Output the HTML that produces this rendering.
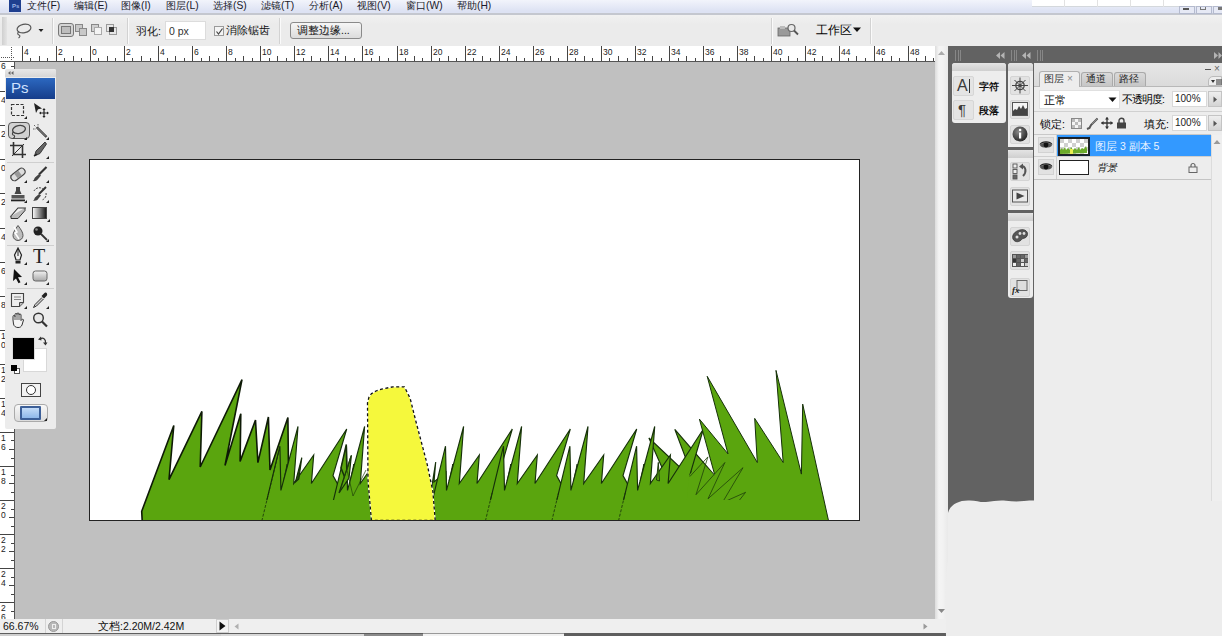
<!DOCTYPE html><html><head><meta charset="utf-8"><title>Photoshop</title><style>
*{margin:0;padding:0;box-sizing:border-box;}
html,body{width:1222px;height:636px;overflow:hidden;background:#c0c0c0;font-family:"Liberation Sans", sans-serif;}
#root{position:relative;width:1222px;height:636px;overflow:hidden;background:#c0c0c0;}
.abs{position:absolute;}
.t{position:absolute;white-space:nowrap;color:#111;font-size:12px;line-height:14px;}
</style></head><body><div id="root">
<div class="abs" style="left:0;top:0;width:1222px;height:15px;background:linear-gradient(#f2f4fb,#dde2f3 85%);border-bottom:2px solid #c4c7cf;"></div>
<div class="abs" style="left:9px;top:0;width:12px;height:12px;background:#1f3f8f;"></div><div class="t" style="left:12px;top:3px;font-size:6px;line-height:7px;font-weight:bold;color:#9fb8e8;">Ps</div>
<div class="t" style="left:27px;top:-1px;font-size:10.3px;color:#1a1a2a;">文件(F)</div>
<div class="t" style="left:74px;top:-1px;font-size:10.3px;color:#1a1a2a;">编辑(E)</div>
<div class="t" style="left:121px;top:-1px;font-size:10.3px;color:#1a1a2a;">图像(I)</div>
<div class="t" style="left:166px;top:-1px;font-size:10.3px;color:#1a1a2a;">图层(L)</div>
<div class="t" style="left:213px;top:-1px;font-size:10.3px;color:#1a1a2a;">选择(S)</div>
<div class="t" style="left:261px;top:-1px;font-size:10.3px;color:#1a1a2a;">滤镜(T)</div>
<div class="t" style="left:309px;top:-1px;font-size:10.3px;color:#1a1a2a;">分析(A)</div>
<div class="t" style="left:357px;top:-1px;font-size:10.3px;color:#1a1a2a;">视图(V)</div>
<div class="t" style="left:406px;top:-1px;font-size:10.3px;color:#1a1a2a;">窗口(W)</div>
<div class="t" style="left:457px;top:-1px;font-size:10.3px;color:#1a1a2a;">帮助(H)</div>
<div class="abs" style="left:1032px;top:0;width:190px;height:7px;background:#fff;border-bottom:1px solid #d4d8dc;"></div>
<div class="abs" style="left:1064px;top:0;width:1px;height:7px;background:#e2e2e2;"></div>
<div class="abs" style="left:1097px;top:0;width:1px;height:7px;background:#e2e2e2;"></div>
<div class="abs" style="left:1130px;top:0;width:1px;height:7px;background:#e2e2e2;"></div>
<div class="abs" style="left:1163px;top:0;width:1px;height:7px;background:#e2e2e2;"></div>
<div class="abs" style="left:1179px;top:6px;width:16px;height:8px;border:1px solid #b4bace;background:#e6e9f5;"></div>
<div class="abs" style="left:1196px;top:6px;width:16px;height:8px;border:1px solid #b4bace;background:#e6e9f5;"></div>
<div class="abs" style="left:1213px;top:6px;width:16px;height:8px;border:1px solid #b4bace;background:#e6e9f5;"></div>
<div class="abs" style="left:1183px;top:8px;width:6px;height:2px;background:#555;"></div>
<div class="abs" style="left:1200px;top:7px;width:6px;height:3px;border:1px solid #777;border-top:none;"></div>
<div class="abs" style="left:1218px;top:7px;width:4px;height:3px;background:#777;"></div>
<div class="abs" style="left:0;top:15px;width:1222px;height:31px;background:linear-gradient(#f1f1f1,#ebebeb 30%,#ebebeb);"></div>
<div class="abs" style="left:948px;top:46px;width:274px;height:590px;background:#626262;"></div>
<div class="abs" style="left:0;top:46px;width:935px;height:16px;background:#fff;border-bottom:1px solid #555;"></div>
<div class="abs" style="left:0;top:62px;width:15px;height:557px;background:#fff;border-right:1px solid #555;"></div>
<div class="abs" style="left:935px;top:46px;width:13px;height:573px;background:linear-gradient(90deg,#dcdcdc,#f4f4f4 30%,#f2f2f2 60%,#e9e9e9);"></div>
<div class="abs" style="left:0;top:619px;width:948px;height:14px;background:#efefef;"></div>
<div class="abs" style="left:0;top:633px;width:948px;height:3px;background:#5e5e5e;"></div>
<div class="abs" style="left:0;top:634px;width:221px;height:2px;background:#cfcfcf;"></div>
<div class="abs" style="left:221px;top:634px;width:143px;height:2px;background:#d8d8d8;"></div>
<div class="abs" style="left:364px;top:634px;width:59px;height:2px;background:#8a8a8a;"></div>
<div class="abs" style="left:423px;top:633px;width:141px;height:3px;background:#f2f2f2;border-top:1px solid #999;"></div>
<div class="t" style="left:3px;top:620px;font-size:10.5px;line-height:13px;color:#111;">66.67%</div>
<div class="abs" style="left:45px;top:619px;width:1px;height:14px;background:#d4d4d4;"></div><div class="abs" style="left:62px;top:619px;width:1px;height:14px;background:#d4d4d4;"></div>
<div class="abs" style="left:48px;top:621px;width:11px;height:11px;border-radius:50%;background:#b8b8b8;border:1px solid #999;"></div><div class="abs" style="left:52px;top:624px;width:4px;height:5px;border:1px solid #eee;"></div>
<div class="t" style="left:98px;top:620px;font-size:10.5px;line-height:13px;color:#111;">文档:2.20M/2.42M</div>
<div class="abs" style="left:216px;top:619px;width:13px;height:14px;background:#f4f4f4;border:1px solid #cfcfcf;"></div><svg class="abs" style="left:219px;top:621px" width="7" height="10"><path d="M0.5 0.5v9l6-4.500z" fill="#111"/></svg>
<svg class="abs" style="left:234px;top:623px" width="5" height="7"><path d="M4.500 0.500v6l-4-3z" fill="#b0b0b0"/></svg>
<svg class="abs" style="left:923px;top:623px" width="5" height="7"><path d="M0.500 0.500v6l4-3z" fill="#999"/></svg>
<div class="abs" style="left:89px;top:159px;width:771px;height:362px;background:#fff;border:1px solid #222;"></div>
<svg class="abs" style="left:0;top:0" width="1222" height="636" viewBox="0 0 1222 636"><defs><clipPath id="cv"><rect x="90" y="160" width="769" height="360"/></clipPath></defs><g clip-path="url(#cv)"><polygon points="142.2,521.0 141.7,511.3 173.8,425.5 169.0,479.6 201.9,411.4 200.2,467.0 242.0,379.7 225.0,465.5 240.8,413.8 240.1,461.4 255.5,420.0 257.9,462.6 268.4,417.0 270.0,469.9 287.9,417.5 288.5,470.0 300.0,521.0" fill="#5aa50e" stroke="#0e1a06" stroke-width="1.6" stroke-linejoin="miter" /><polygon points="428.0,521.0 431.8,486.5 435.7,462.0 434.0,482.0 446.0,472.0 447.0,521.0" fill="#5aa50e" stroke="#16300a" stroke-width="1.15" stroke-linejoin="miter" /><polygon points="283.5,481.0 287.2,464.0 285.5,483.0" fill="#5aa50e" stroke="#16300a" stroke-width="0.9" stroke-linejoin="miter" /><polygon points="261.8,521.0 279.9,446.2 280.9,490.4 298.0,426.5 293.7,483.5 313.7,455.0 311.4,483.5 346.7,429.0 333.0,475.6 358.0,521.0" fill="#5aa50e" stroke="#16300a" stroke-width="1.15" stroke-linejoin="miter" /><polygon points="350.1,481.0 353.8,464.0 352.1,483.0" fill="#5aa50e" stroke="#16300a" stroke-width="0.9" stroke-linejoin="miter" /><polygon points="328.4,521.0 346.5,446.2 347.5,490.4 364.6,426.5 360.3,483.5 380.3,455.0 378.0,483.5 413.3,429.0 399.6,475.6 424.6,521.0" fill="#5aa50e" stroke="#16300a" stroke-width="1.15" stroke-linejoin="miter" /><polygon points="449.1,481.0 452.8,464.0 451.1,483.0" fill="#5aa50e" stroke="#16300a" stroke-width="0.9" stroke-linejoin="miter" /><polygon points="427.4,521.0 445.5,446.2 446.5,490.4 463.6,426.5 459.3,483.5 479.3,455.0 477.0,483.5 512.3,429.0 498.6,475.6 523.6,521.0" fill="#5aa50e" stroke="#16300a" stroke-width="1.15" stroke-linejoin="miter" /><polygon points="507.1,481.0 510.8,464.0 509.1,483.0" fill="#5aa50e" stroke="#16300a" stroke-width="0.9" stroke-linejoin="miter" /><polygon points="485.4,521.0 503.5,446.2 504.5,490.4 521.6,426.5 517.3,483.5 537.3,455.0 535.0,483.5 570.3,429.0 556.6,475.6 581.6,521.0" fill="#5aa50e" stroke="#16300a" stroke-width="1.15" stroke-linejoin="miter" /><polygon points="573.5,481.0 577.2,464.0 575.5,483.0" fill="#5aa50e" stroke="#16300a" stroke-width="0.9" stroke-linejoin="miter" /><polygon points="551.8,521.0 569.9,446.2 570.9,490.4 588.0,426.5 583.7,483.5 603.7,455.0 601.4,483.5 636.7,429.0 623.0,475.6 648.0,521.0" fill="#5aa50e" stroke="#16300a" stroke-width="1.15" stroke-linejoin="miter" /><polygon points="640.2,481.0 643.9,464.0 642.2,483.0" fill="#5aa50e" stroke="#16300a" stroke-width="0.9" stroke-linejoin="miter" /><polygon points="674.8,429.4 716.0,477.0 694.0,480.0" fill="#5aa50e" stroke="#16300a" stroke-width="1.15" stroke-linejoin="miter" /><polygon points="648.9,438.0 684.0,471.0 672.0,490.0" fill="#5aa50e" stroke="#16300a" stroke-width="1.15" stroke-linejoin="miter" /><polygon points="618.5,521.0 636.6,446.2 637.6,490.4 654.7,426.5 650.4,483.5 670.4,455.0 668.1,483.5 703.4,429.0 689.7,475.6 714.7,521.0" fill="#5aa50e" stroke="#16300a" stroke-width="1.15" stroke-linejoin="miter" /><polygon points="656.5,480.0 658.3,462.4 659.5,481.0" fill="#5aa50e" stroke="#16300a" stroke-width="0.9" stroke-linejoin="miter" /><polygon points="295.5,482.0 301.8,457.7 298.8,479.0" fill="#274d0c" stroke="#16300a" stroke-width="1.2" stroke-linejoin="miter" /><polygon points="341.0,468.0 346.3,444.5 347.0,483.0" fill="#5aa50e" stroke="#16300a" stroke-width="1.5" stroke-linejoin="miter" /><polygon points="339.0,493.0 351.4,455.3 349.0,478.0" fill="#5aa50e" stroke="#16300a" stroke-width="1.2" stroke-linejoin="miter" /><polygon points="689.0,476.0 700.0,460.0 716.0,477.0 705.0,521.0 685.0,521.0" fill="#5aa50e" stroke="none" stroke-width="0" stroke-linejoin="miter" /><polygon points="828.6,521.0 802.7,404.1 801.4,474.1 776.0,370.4 783.2,462.5 754.7,418.4 757.3,462.5 707.2,376.3 728.0,453.9 699.4,419.1 714.5,474.1 706.0,521.0" fill="#5aa50e" stroke="none" stroke-width="0" stroke-linejoin="miter" /><polyline points="828.6,521.0 802.7,404.1 801.4,474.1 776.0,370.4 783.2,462.5 754.7,418.4 757.3,462.5 707.2,376.3 728.0,453.9 699.4,419.1 714.5,474.1" fill="none" stroke="#16300a" stroke-width="1"/><polyline points="689.8,476.6 707.9,456.9 696,494.7 724.9,462.5 708,498.8 743,467.7 722.3,502.7 745.6,492.3 731.3,510.5 749.5,511.8 737.8,518.8" fill="none" stroke="#20400a" stroke-width="0.8"/><polyline points="339.5,492.8 350.9,456.3 347,470 353,496 366,470" fill="none" stroke="#20400a" stroke-width="0.7"/><rect x="147" y="500" width="676" height="21" fill="#5aa50e"/><line x1="261.8" y1="521" x2="278.7" y2="452" stroke="#16300a" stroke-width="0.8" stroke-dasharray="3 1.5"/><line x1="485.40000000000003" y1="521" x2="492.1" y2="493" stroke="#16300a" stroke-width="0.8" stroke-dasharray="3 1.5"/><line x1="551.8" y1="521" x2="558.5" y2="493" stroke="#16300a" stroke-width="0.8" stroke-dasharray="3 1.5"/><line x1="618.5" y1="521" x2="625.2" y2="493" stroke="#16300a" stroke-width="0.8" stroke-dasharray="3 1.5"/><polygon points="371.4,520.5 368.0,480.3 367.5,402.8 369.0,397.0 371.4,393.7 376.0,391.0 381.6,389.1 393.0,386.8 404.4,386.8 410.1,398.2 415.8,421.0 427.2,464.3 432.9,491.6 435.2,520.5" fill="#f5f83c" stroke="#fff" stroke-width="1" stroke-linejoin="miter" /><polygon points="371.4,520.5 368.0,480.3 367.5,402.8 369.0,397.0 371.4,393.7 376.0,391.0 381.6,389.1 393.0,386.8 404.4,386.8 410.1,398.2 415.8,421.0 427.2,464.3 432.9,491.6 435.2,520.5" fill="none" stroke="#111" stroke-width="1.3" stroke-linejoin="miter" stroke-dasharray="3 2.5"/></g></svg>
<div class="abs" style="left:952px;top:63px;width:54px;height:60px;background:#ededed;border-radius:3px;"></div>
<div class="abs" style="left:1008px;top:63px;width:25px;height:235px;background:#ededed;border-radius:3px;"></div>
<div class="abs" style="left:1034px;top:63px;width:188px;height:573px;background:#ededed;"></div>
<svg class="abs" style="left:940px;top:495px" width="282" height="141" viewBox="940 495 282 141"><path d="M948 636V513C950 505 958 500.500 968 500.500C975 500 980 502.500 986 502C994 501.500 998 500 1006 500.800C1012 501.500 1018 501.800 1024 501C1028 500.500 1031 500.500 1034 500.500H1222V636z" fill="#ededed"/><path d="M948 560C945.500 575 945.500 600 946 636H948z" fill="#ededed"/></svg>
<svg class="abs" style="left:0;top:0" width="1222" height="636" viewBox="0 0 1222 636" shape-rendering="crispEdges"><rect x="22" y="46" width="1" height="15" fill="#444"/><rect x="30" y="58" width="1" height="3" fill="#444"/><rect x="39" y="56" width="1" height="5" fill="#444"/><rect x="47" y="58" width="1" height="3" fill="#444"/><rect x="56" y="46" width="1" height="15" fill="#444"/><rect x="64" y="58" width="1" height="3" fill="#444"/><rect x="73" y="56" width="1" height="5" fill="#444"/><rect x="81" y="58" width="1" height="3" fill="#444"/><rect x="90" y="46" width="1" height="15" fill="#444"/><rect x="98" y="58" width="1" height="3" fill="#444"/><rect x="107" y="56" width="1" height="5" fill="#444"/><rect x="115" y="58" width="1" height="3" fill="#444"/><rect x="124" y="46" width="1" height="15" fill="#444"/><rect x="132" y="58" width="1" height="3" fill="#444"/><rect x="141" y="56" width="1" height="5" fill="#444"/><rect x="150" y="58" width="1" height="3" fill="#444"/><rect x="158" y="46" width="1" height="15" fill="#444"/><rect x="167" y="58" width="1" height="3" fill="#444"/><rect x="175" y="56" width="1" height="5" fill="#444"/><rect x="184" y="58" width="1" height="3" fill="#444"/><rect x="192" y="46" width="1" height="15" fill="#444"/><rect x="201" y="58" width="1" height="3" fill="#444"/><rect x="209" y="56" width="1" height="5" fill="#444"/><rect x="218" y="58" width="1" height="3" fill="#444"/><rect x="226" y="46" width="1" height="15" fill="#444"/><rect x="235" y="58" width="1" height="3" fill="#444"/><rect x="243" y="56" width="1" height="5" fill="#444"/><rect x="252" y="58" width="1" height="3" fill="#444"/><rect x="260" y="46" width="1" height="15" fill="#444"/><rect x="269" y="58" width="1" height="3" fill="#444"/><rect x="277" y="56" width="1" height="5" fill="#444"/><rect x="286" y="58" width="1" height="3" fill="#444"/><rect x="294" y="46" width="1" height="15" fill="#444"/><rect x="303" y="58" width="1" height="3" fill="#444"/><rect x="311" y="56" width="1" height="5" fill="#444"/><rect x="320" y="58" width="1" height="3" fill="#444"/><rect x="328" y="46" width="1" height="15" fill="#444"/><rect x="337" y="58" width="1" height="3" fill="#444"/><rect x="345" y="56" width="1" height="5" fill="#444"/><rect x="354" y="58" width="1" height="3" fill="#444"/><rect x="362" y="46" width="1" height="15" fill="#444"/><rect x="371" y="58" width="1" height="3" fill="#444"/><rect x="379" y="56" width="1" height="5" fill="#444"/><rect x="388" y="58" width="1" height="3" fill="#444"/><rect x="397" y="46" width="1" height="15" fill="#444"/><rect x="405" y="58" width="1" height="3" fill="#444"/><rect x="414" y="56" width="1" height="5" fill="#444"/><rect x="422" y="58" width="1" height="3" fill="#444"/><rect x="431" y="46" width="1" height="15" fill="#444"/><rect x="439" y="58" width="1" height="3" fill="#444"/><rect x="448" y="56" width="1" height="5" fill="#444"/><rect x="456" y="58" width="1" height="3" fill="#444"/><rect x="465" y="46" width="1" height="15" fill="#444"/><rect x="473" y="58" width="1" height="3" fill="#444"/><rect x="482" y="56" width="1" height="5" fill="#444"/><rect x="490" y="58" width="1" height="3" fill="#444"/><rect x="499" y="46" width="1" height="15" fill="#444"/><rect x="507" y="58" width="1" height="3" fill="#444"/><rect x="516" y="56" width="1" height="5" fill="#444"/><rect x="524" y="58" width="1" height="3" fill="#444"/><rect x="533" y="46" width="1" height="15" fill="#444"/><rect x="541" y="58" width="1" height="3" fill="#444"/><rect x="550" y="56" width="1" height="5" fill="#444"/><rect x="558" y="58" width="1" height="3" fill="#444"/><rect x="567" y="46" width="1" height="15" fill="#444"/><rect x="575" y="58" width="1" height="3" fill="#444"/><rect x="584" y="56" width="1" height="5" fill="#444"/><rect x="592" y="58" width="1" height="3" fill="#444"/><rect x="601" y="46" width="1" height="15" fill="#444"/><rect x="609" y="58" width="1" height="3" fill="#444"/><rect x="618" y="56" width="1" height="5" fill="#444"/><rect x="627" y="58" width="1" height="3" fill="#444"/><rect x="635" y="46" width="1" height="15" fill="#444"/><rect x="644" y="58" width="1" height="3" fill="#444"/><rect x="652" y="56" width="1" height="5" fill="#444"/><rect x="661" y="58" width="1" height="3" fill="#444"/><rect x="669" y="46" width="1" height="15" fill="#444"/><rect x="678" y="58" width="1" height="3" fill="#444"/><rect x="686" y="56" width="1" height="5" fill="#444"/><rect x="695" y="58" width="1" height="3" fill="#444"/><rect x="703" y="46" width="1" height="15" fill="#444"/><rect x="712" y="58" width="1" height="3" fill="#444"/><rect x="720" y="56" width="1" height="5" fill="#444"/><rect x="729" y="58" width="1" height="3" fill="#444"/><rect x="737" y="46" width="1" height="15" fill="#444"/><rect x="746" y="58" width="1" height="3" fill="#444"/><rect x="754" y="56" width="1" height="5" fill="#444"/><rect x="763" y="58" width="1" height="3" fill="#444"/><rect x="771" y="46" width="1" height="15" fill="#444"/><rect x="780" y="58" width="1" height="3" fill="#444"/><rect x="788" y="56" width="1" height="5" fill="#444"/><rect x="797" y="58" width="1" height="3" fill="#444"/><rect x="805" y="46" width="1" height="15" fill="#444"/><rect x="814" y="58" width="1" height="3" fill="#444"/><rect x="822" y="56" width="1" height="5" fill="#444"/><rect x="831" y="58" width="1" height="3" fill="#444"/><rect x="839" y="46" width="1" height="15" fill="#444"/><rect x="848" y="58" width="1" height="3" fill="#444"/><rect x="856" y="56" width="1" height="5" fill="#444"/><rect x="865" y="58" width="1" height="3" fill="#444"/><rect x="874" y="46" width="1" height="15" fill="#444"/><rect x="882" y="58" width="1" height="3" fill="#444"/><rect x="891" y="56" width="1" height="5" fill="#444"/><rect x="899" y="58" width="1" height="3" fill="#444"/><rect x="908" y="46" width="1" height="15" fill="#444"/><rect x="916" y="58" width="1" height="3" fill="#444"/><rect x="925" y="56" width="1" height="5" fill="#444"/><rect x="933" y="58" width="1" height="3" fill="#444"/><rect x="11" y="66" width="3" height="1" fill="#444"/><rect x="9" y="74" width="5" height="1" fill="#444"/><rect x="11" y="83" width="3" height="1" fill="#444"/><rect x="0" y="91" width="14" height="1" fill="#444"/><rect x="11" y="100" width="3" height="1" fill="#444"/><rect x="9" y="108" width="5" height="1" fill="#444"/><rect x="11" y="117" width="3" height="1" fill="#444"/><rect x="0" y="125" width="14" height="1" fill="#444"/><rect x="11" y="134" width="3" height="1" fill="#444"/><rect x="9" y="142" width="5" height="1" fill="#444"/><rect x="11" y="151" width="3" height="1" fill="#444"/><rect x="0" y="159" width="14" height="1" fill="#444"/><rect x="11" y="168" width="3" height="1" fill="#444"/><rect x="9" y="176" width="5" height="1" fill="#444"/><rect x="11" y="185" width="3" height="1" fill="#444"/><rect x="0" y="193" width="14" height="1" fill="#444"/><rect x="11" y="202" width="3" height="1" fill="#444"/><rect x="9" y="211" width="5" height="1" fill="#444"/><rect x="11" y="219" width="3" height="1" fill="#444"/><rect x="0" y="228" width="14" height="1" fill="#444"/><rect x="11" y="236" width="3" height="1" fill="#444"/><rect x="9" y="245" width="5" height="1" fill="#444"/><rect x="11" y="253" width="3" height="1" fill="#444"/><rect x="0" y="262" width="14" height="1" fill="#444"/><rect x="11" y="270" width="3" height="1" fill="#444"/><rect x="9" y="279" width="5" height="1" fill="#444"/><rect x="11" y="287" width="3" height="1" fill="#444"/><rect x="0" y="296" width="14" height="1" fill="#444"/><rect x="11" y="304" width="3" height="1" fill="#444"/><rect x="9" y="313" width="5" height="1" fill="#444"/><rect x="11" y="321" width="3" height="1" fill="#444"/><rect x="0" y="330" width="14" height="1" fill="#444"/><rect x="11" y="338" width="3" height="1" fill="#444"/><rect x="9" y="347" width="5" height="1" fill="#444"/><rect x="11" y="355" width="3" height="1" fill="#444"/><rect x="0" y="364" width="14" height="1" fill="#444"/><rect x="11" y="372" width="3" height="1" fill="#444"/><rect x="9" y="381" width="5" height="1" fill="#444"/><rect x="11" y="389" width="3" height="1" fill="#444"/><rect x="0" y="398" width="14" height="1" fill="#444"/><rect x="11" y="406" width="3" height="1" fill="#444"/><rect x="9" y="415" width="5" height="1" fill="#444"/><rect x="11" y="423" width="3" height="1" fill="#444"/><rect x="0" y="432" width="14" height="1" fill="#444"/><rect x="11" y="440" width="3" height="1" fill="#444"/><rect x="9" y="449" width="5" height="1" fill="#444"/><rect x="11" y="458" width="3" height="1" fill="#444"/><rect x="0" y="466" width="14" height="1" fill="#444"/><rect x="11" y="475" width="3" height="1" fill="#444"/><rect x="9" y="483" width="5" height="1" fill="#444"/><rect x="11" y="492" width="3" height="1" fill="#444"/><rect x="0" y="500" width="14" height="1" fill="#444"/><rect x="11" y="509" width="3" height="1" fill="#444"/><rect x="9" y="517" width="5" height="1" fill="#444"/><rect x="11" y="526" width="3" height="1" fill="#444"/><rect x="0" y="534" width="14" height="1" fill="#444"/><rect x="11" y="543" width="3" height="1" fill="#444"/><rect x="9" y="551" width="5" height="1" fill="#444"/><rect x="11" y="560" width="3" height="1" fill="#444"/><rect x="0" y="568" width="14" height="1" fill="#444"/><rect x="11" y="577" width="3" height="1" fill="#444"/><rect x="9" y="585" width="5" height="1" fill="#444"/><rect x="11" y="594" width="3" height="1" fill="#444"/><rect x="0" y="602" width="14" height="1" fill="#444"/><rect x="11" y="611" width="3" height="1" fill="#444"/><path d="M11.5 47V61M1 57.5H14" stroke="#555" stroke-width="1" stroke-dasharray="1 1" fill="none"/></svg>
<div class="t" style="left:24px;top:48px;font-size:8.5px;line-height:9px;color:#222;">4</div>
<div class="t" style="left:58px;top:48px;font-size:8.5px;line-height:9px;color:#222;">2</div>
<div class="t" style="left:92px;top:48px;font-size:8.5px;line-height:9px;color:#222;">0</div>
<div class="t" style="left:126px;top:48px;font-size:8.5px;line-height:9px;color:#222;">2</div>
<div class="t" style="left:160px;top:48px;font-size:8.5px;line-height:9px;color:#222;">4</div>
<div class="t" style="left:194px;top:48px;font-size:8.5px;line-height:9px;color:#222;">6</div>
<div class="t" style="left:228px;top:48px;font-size:8.5px;line-height:9px;color:#222;">8</div>
<div class="t" style="left:262px;top:48px;font-size:8.5px;line-height:9px;color:#222;">10</div>
<div class="t" style="left:296px;top:48px;font-size:8.5px;line-height:9px;color:#222;">12</div>
<div class="t" style="left:330px;top:48px;font-size:8.5px;line-height:9px;color:#222;">14</div>
<div class="t" style="left:364px;top:48px;font-size:8.5px;line-height:9px;color:#222;">16</div>
<div class="t" style="left:399px;top:48px;font-size:8.5px;line-height:9px;color:#222;">18</div>
<div class="t" style="left:433px;top:48px;font-size:8.5px;line-height:9px;color:#222;">20</div>
<div class="t" style="left:467px;top:48px;font-size:8.5px;line-height:9px;color:#222;">22</div>
<div class="t" style="left:501px;top:48px;font-size:8.5px;line-height:9px;color:#222;">24</div>
<div class="t" style="left:535px;top:48px;font-size:8.5px;line-height:9px;color:#222;">26</div>
<div class="t" style="left:569px;top:48px;font-size:8.5px;line-height:9px;color:#222;">28</div>
<div class="t" style="left:603px;top:48px;font-size:8.5px;line-height:9px;color:#222;">30</div>
<div class="t" style="left:637px;top:48px;font-size:8.5px;line-height:9px;color:#222;">32</div>
<div class="t" style="left:671px;top:48px;font-size:8.5px;line-height:9px;color:#222;">34</div>
<div class="t" style="left:705px;top:48px;font-size:8.5px;line-height:9px;color:#222;">36</div>
<div class="t" style="left:739px;top:48px;font-size:8.5px;line-height:9px;color:#222;">38</div>
<div class="t" style="left:773px;top:48px;font-size:8.5px;line-height:9px;color:#222;">40</div>
<div class="t" style="left:807px;top:48px;font-size:8.5px;line-height:9px;color:#222;">42</div>
<div class="t" style="left:841px;top:48px;font-size:8.5px;line-height:9px;color:#222;">44</div>
<div class="t" style="left:876px;top:48px;font-size:8.5px;line-height:9px;color:#222;">46</div>
<div class="t" style="left:910px;top:48px;font-size:8.5px;line-height:9px;color:#222;">48</div>
<div class="abs" style="left:0;top:62px;width:14px;height:557px;overflow:hidden;">
<div class="t" style="left:1px;top:0px;font-size:8.5px;line-height:9px;color:#222;">6</div>
<div class="t" style="left:1px;top:34px;font-size:8.5px;line-height:9px;color:#222;">4</div>
<div class="t" style="left:1px;top:68px;font-size:8.5px;line-height:9px;color:#222;">2</div>
<div class="t" style="left:1px;top:102px;font-size:8.5px;line-height:9px;color:#222;">0</div>
<div class="t" style="left:1px;top:136px;font-size:8.5px;line-height:9px;color:#222;">2</div>
<div class="t" style="left:1px;top:171px;font-size:8.5px;line-height:9px;color:#222;">4</div>
<div class="t" style="left:1px;top:205px;font-size:8.5px;line-height:9px;color:#222;">6</div>
<div class="t" style="left:1px;top:239px;font-size:8.5px;line-height:9px;color:#222;">8</div>
<div class="t" style="left:1px;top:270px;font-size:8.5px;line-height:9px;color:#222;">1</div>
<div class="t" style="left:1px;top:279px;font-size:8.5px;line-height:9px;color:#222;">0</div>
<div class="t" style="left:1px;top:304px;font-size:8.5px;line-height:9px;color:#222;">1</div>
<div class="t" style="left:1px;top:313px;font-size:8.5px;line-height:9px;color:#222;">2</div>
<div class="t" style="left:1px;top:338px;font-size:8.5px;line-height:9px;color:#222;">1</div>
<div class="t" style="left:1px;top:347px;font-size:8.5px;line-height:9px;color:#222;">4</div>
<div class="t" style="left:1px;top:372px;font-size:8.5px;line-height:9px;color:#222;">1</div>
<div class="t" style="left:1px;top:381px;font-size:8.5px;line-height:9px;color:#222;">6</div>
<div class="t" style="left:1px;top:406px;font-size:8.5px;line-height:9px;color:#222;">1</div>
<div class="t" style="left:1px;top:415px;font-size:8.5px;line-height:9px;color:#222;">8</div>
<div class="t" style="left:1px;top:440px;font-size:8.5px;line-height:9px;color:#222;">2</div>
<div class="t" style="left:1px;top:449px;font-size:8.5px;line-height:9px;color:#222;">0</div>
<div class="t" style="left:1px;top:474px;font-size:8.5px;line-height:9px;color:#222;">2</div>
<div class="t" style="left:1px;top:483px;font-size:8.5px;line-height:9px;color:#222;">2</div>
<div class="t" style="left:1px;top:508px;font-size:8.5px;line-height:9px;color:#222;">2</div>
<div class="t" style="left:1px;top:517px;font-size:8.5px;line-height:9px;color:#222;">4</div>
<div class="t" style="left:1px;top:542px;font-size:8.5px;line-height:9px;color:#222;">2</div>
<div class="t" style="left:1px;top:551px;font-size:8.5px;line-height:9px;color:#222;">6</div>
</div>
<div class="abs" style="left:2px;top:17px;width:5px;height:28px;background:linear-gradient(90deg,#cfcfcf,#e4e4e4);"></div>
<svg class="abs" style="left:14px;top:22px" width="32" height="18" viewBox="0 0 32 18"><ellipse cx="10" cy="6.5" rx="7" ry="4.3" transform="rotate(-12 10 6.5)" fill="none" stroke="#555" stroke-width="1.2"/><path d="M5 9.5c-2 1.5-1.5 3 0 3.5s1 2-0.5 3" fill="none" stroke="#555" stroke-width="1.1"/><path d="M24.5 7h5l-2.5 3z" fill="#222"/></svg>
<div class="abs" style="left:52px;top:18px;width:1px;height:26px;background:#d2d2d2;border-right:1px solid #fafafa;box-sizing:content-box;"></div>
<div class="abs" style="left:127px;top:18px;width:1px;height:26px;background:#d2d2d2;border-right:1px solid #fafafa;box-sizing:content-box;"></div>
<div class="abs" style="left:279px;top:18px;width:1px;height:26px;background:#d2d2d2;border-right:1px solid #fafafa;box-sizing:content-box;"></div>
<div class="abs" style="left:771px;top:18px;width:1px;height:26px;background:#d2d2d2;border-right:1px solid #fafafa;box-sizing:content-box;"></div>
<div class="abs" style="left:870px;top:18px;width:1px;height:26px;background:#d2d2d2;border-right:1px solid #fafafa;box-sizing:content-box;"></div>
<div class="abs" style="left:58px;top:23px;width:16px;height:14px;border:1px solid #777;border-radius:3px;background:#d4d4d4;"></div>
<div class="abs" style="left:61px;top:26px;width:10px;height:8px;border:1px solid #777;background:#bdbdbd;"></div>
<div class="abs" style="left:75px;top:24px;width:8px;height:8px;border:1px solid #888;background:#c8c8c8;"></div><div class="abs" style="left:79px;top:28px;width:8px;height:8px;border:1px solid #888;background:#c8c8c8;"></div>
<div class="abs" style="left:91px;top:24px;width:8px;height:8px;border:1px solid #888;background:#d0d0d0;"></div><div class="abs" style="left:94px;top:27px;width:8px;height:8px;border:1px solid #aaa;background:#f4f4f4;"></div>
<div class="abs" style="left:106px;top:24px;width:8px;height:8px;border:1px solid #999;background:#e6e6e6;"></div><div class="abs" style="left:109px;top:27px;width:8px;height:8px;border:1px solid #999;background:#e6e6e6;"></div><div class="abs" style="left:109px;top:27px;width:5px;height:5px;background:#333;"></div>
<div class="t" style="left:136px;top:24px;font-size:10.5px;">羽化:</div>
<div class="abs" style="left:165px;top:21px;width:41px;height:19px;background:#fff;border:1px solid #dcdcdc;"></div>
<div class="t" style="left:169px;top:24px;font-size:10.5px;color:#333;">0 px</div>
<div class="abs" style="left:214px;top:26px;width:10px;height:10px;background:#f4f4f4;border:1px solid #9a9a9a;"></div>
<svg class="abs" style="left:215px;top:27px" width="9" height="9"><path d="M1.500 4.500l2 2.500 4-5.500" fill="none" stroke="#444" stroke-width="1.200"/></svg>
<div class="t" style="left:226px;top:23px;font-size:10.5px;">消除锯齿</div>
<div class="abs" style="left:290px;top:22px;width:72px;height:17px;background:linear-gradient(#f6f6f6,#dcdcdc);border:1px solid #8a8a8a;border-radius:3px;"></div>
<div class="t" style="left:297px;top:23px;font-size:10.5px;">调整边缘...</div>
<svg class="abs" style="left:777px;top:22px" width="23" height="16" viewBox="0 0 23 16"><rect x="1" y="6" width="12" height="8" fill="#9a9a9a" stroke="#666" stroke-width="0.8"/><rect x="3" y="4" width="5" height="3" fill="#bbb"/><circle cx="14.5" cy="6" r="3.5" fill="#e8e8e8" stroke="#666" stroke-width="1.2"/><path d="M17 8.5l4 4" stroke="#555" stroke-width="1.8"/></svg>
<div class="t" style="left:816px;top:23px;font-size:11.5px;color:#000;">工作区</div>
<svg class="abs" style="left:852px;top:26px" width="10" height="8"><path d="M1 1.5h8l-4 4.5z" fill="#111"/></svg>
<div class="abs" style="left:955.0px;top:50px;width:1px;height:11px;background:#878787;"></div><div class="abs" style="left:957.5px;top:50px;width:1px;height:11px;background:#878787;"></div><div class="abs" style="left:960.0px;top:50px;width:1px;height:11px;background:#878787;"></div>
<div class="abs" style="left:1011.0px;top:50px;width:1px;height:11px;background:#878787;"></div><div class="abs" style="left:1013.5px;top:50px;width:1px;height:11px;background:#878787;"></div><div class="abs" style="left:1016.0px;top:50px;width:1px;height:11px;background:#878787;"></div>
<div class="abs" style="left:1037.0px;top:50px;width:1px;height:11px;background:#878787;"></div><div class="abs" style="left:1039.5px;top:50px;width:1px;height:11px;background:#878787;"></div><div class="abs" style="left:1042.0px;top:50px;width:1px;height:11px;background:#878787;"></div>
<svg class="abs" style="left:996px;top:52px" width="9" height="7"><path d="M4 0v7L0 3.5zM8.5 0v7L4.5 3.5z" fill="#b4b4b4"/></svg>
<svg class="abs" style="left:1022px;top:52px" width="9" height="7"><path d="M4 0v7L0 3.5zM8.5 0v7L4.5 3.5z" fill="#b4b4b4"/></svg>
<svg class="abs" style="left:1214px;top:52px" width="8" height="7"><path d="M0 0v7L4 3.5zM4.5 0v7L8 3.5z" fill="#b4b4b4"/></svg>
<svg class="abs" style="left:937px;top:50px" width="9" height="6"><path d="M4.5 1L8 5H1z" fill="#aaa"/></svg>
<svg class="abs" style="left:937px;top:608px" width="9" height="6"><path d="M4.5 5L8 1H1z" fill="#888"/></svg>
<div class="abs" style="left:952px;top:63px;width:54px;height:8px;background:linear-gradient(#e4e4e4,#cfcfcf);border-radius:3px 3px 0 0;"></div>
<div class="abs" style="left:953px;top:76px;width:21px;height:20px;background:#e4e4e4;border:1px solid #d6d6d6;border-radius:2px;"></div>
<div class="abs" style="left:953px;top:100px;width:21px;height:20px;background:#e4e4e4;border:1px solid #d6d6d6;border-radius:2px;"></div>
<div class="t" style="left:957px;top:77px;font-size:16px;line-height:18px;color:#3a3a3a;">A</div><div class="abs" style="left:969px;top:79px;width:1px;height:14px;background:#333;"></div>
<div class="t" style="left:958px;top:101px;font-size:15px;line-height:18px;color:#3a3a3a;">¶</div>
<div class="t" style="left:979px;top:80px;font-size:10px;color:#111;font-weight:bold;">字符</div>
<div class="t" style="left:979px;top:104px;font-size:10px;color:#111;font-weight:bold;">段落</div>
<div class="abs" style="left:1008px;top:147px;width:25px;height:3px;background:#626262;"></div>
<div class="abs" style="left:1008px;top:210px;width:25px;height:3px;background:#626262;"></div>
<div class="abs" style="left:1008px;top:63px;width:25px;height:8px;background:linear-gradient(#e4e4e4,#cfcfcf);border-radius:3px 3px 0 0;"></div>
<div class="abs" style="left:1008px;top:150px;width:25px;height:8px;background:linear-gradient(#e4e4e4,#cfcfcf);border-radius:3px 3px 0 0;"></div>
<div class="abs" style="left:1008px;top:213px;width:25px;height:8px;background:linear-gradient(#e4e4e4,#cfcfcf);border-radius:3px 3px 0 0;"></div>
<div class="abs" style="left:1010px;top:76px;width:20px;height:19px;background:#e2e2e2;border:1px solid #d4d4d4;border-radius:2px;"></div>
<div class="abs" style="left:1010px;top:100px;width:20px;height:19px;background:#e2e2e2;border:1px solid #d4d4d4;border-radius:2px;"></div>
<div class="abs" style="left:1010px;top:125px;width:20px;height:19px;background:#e2e2e2;border:1px solid #d4d4d4;border-radius:2px;"></div>
<div class="abs" style="left:1010px;top:162px;width:20px;height:19px;background:#e2e2e2;border:1px solid #d4d4d4;border-radius:2px;"></div>
<div class="abs" style="left:1010px;top:187px;width:20px;height:19px;background:#e2e2e2;border:1px solid #d4d4d4;border-radius:2px;"></div>
<div class="abs" style="left:1010px;top:227px;width:20px;height:19px;background:#e2e2e2;border:1px solid #d4d4d4;border-radius:2px;"></div>
<div class="abs" style="left:1010px;top:251px;width:20px;height:19px;background:#e2e2e2;border:1px solid #d4d4d4;border-radius:2px;"></div>
<div class="abs" style="left:1010px;top:278px;width:20px;height:19px;background:#e2e2e2;border:1px solid #d4d4d4;border-radius:2px;"></div>
<svg class="abs" style="left:1011px;top:77px" width="18" height="17" viewBox="0 0 18 17"><circle cx="9" cy="8.5" r="4.2" fill="none" stroke="#444" stroke-width="1.3"/><path d="M9 0.5v16M1 8.5h16M3.5 3l11 11M14.5 3l-11 11" stroke="#444" stroke-width="1"/><circle cx="9" cy="8.5" r="1.6" fill="#444"/></svg>
<svg class="abs" style="left:1011px;top:101px" width="18" height="16" viewBox="0 0 18 16"><rect x="1.5" y="1.5" width="15" height="13" fill="#f4f4f4" stroke="#555" stroke-width="1"/><path d="M2 14V10l2-2 2 1 2-4 2 3 2-4 2 4 2-1v7z" fill="#444"/></svg>
<svg class="abs" style="left:1011px;top:125px" width="18" height="18" viewBox="0 0 18 18"><defs><radialGradient id="gi" cx="40%" cy="35%" r="70%"><stop offset="0" stop-color="#8a8a8a"/><stop offset="1" stop-color="#222"/></radialGradient></defs><circle cx="9" cy="9" r="7.5" fill="url(#gi)"/><rect x="8" y="7.5" width="2.2" height="6" fill="#fff"/><circle cx="9.1" cy="5" r="1.3" fill="#fff"/></svg>
<svg class="abs" style="left:1011px;top:163px" width="18" height="17" viewBox="0 0 18 17"><rect x="2" y="1" width="4" height="4" fill="#eee" stroke="#555" stroke-width="0.9"/><rect x="2" y="6.5" width="4" height="4" fill="#eee" stroke="#555" stroke-width="0.9"/><rect x="2" y="12" width="4" height="4" fill="#666" stroke="#555" stroke-width="0.9"/><path d="M10 3c5 0 6 6 2 10" fill="none" stroke="#555" stroke-width="2"/><path d="M8 3.5l4-3v6z" fill="#555"/></svg>
<svg class="abs" style="left:1011px;top:188px" width="18" height="16" viewBox="0 0 18 16"><rect x="1.5" y="2" width="15" height="12" fill="#e8e8e8" stroke="#555" stroke-width="1"/><path d="M5.5 4.5v7l8-3.5z" fill="#444"/></svg>
<svg class="abs" style="left:1011px;top:228px" width="18" height="16" viewBox="0 0 18 16"><path d="M9 2c5-1.5 9 2 7 6-1.5 3-4 1.5-5.5 3.5C9 14 4 15 2 11 0.5 7 4 3 9 2z" fill="#555" stroke="#333" stroke-width="0.8"/><circle cx="6" cy="9" r="1.5" fill="#ddd"/><circle cx="9" cy="5.5" r="1.4" fill="#ddd"/><circle cx="13" cy="5.5" r="1.4" fill="#ddd"/></svg>
<svg class="abs" style="left:1011px;top:253px" width="18" height="15" viewBox="0 0 18 15"><rect x="1" y="1" width="16" height="13" fill="#555"/><rect x="2" y="2" width="3" height="3" fill="#999"/><rect x="6" y="2" width="3" height="3" fill="#666"/><rect x="10" y="2" width="3" height="3" fill="#666"/><rect x="14" y="2" width="3" height="3" fill="#999"/><rect x="2" y="6" width="3" height="3" fill="#333"/><rect x="6" y="6" width="3" height="3" fill="#666"/><rect x="10" y="6" width="3" height="3" fill="#ccc"/><rect x="14" y="6" width="3" height="3" fill="#666"/><rect x="2" y="10" width="3" height="3" fill="#eee"/><rect x="6" y="10" width="3" height="3" fill="#666"/><rect x="10" y="10" width="3" height="3" fill="#eee"/><rect x="14" y="10" width="3" height="3" fill="#ccc"/></svg>
<svg class="abs" style="left:1011px;top:279px" width="18" height="17" viewBox="0 0 18 17"><rect x="6" y="1.5" width="10" height="10" fill="#ddd" stroke="#666" stroke-width="1"/></svg><div class="t" style="left:1012px;top:285px;font-size:9px;line-height:10px;font-style:italic;font-weight:bold;font-family:'Liberation Serif',serif;color:#222;">fx</div>
<div class="abs" style="left:1034px;top:63px;width:188px;height:24px;background:linear-gradient(#e6e6e6,#dadada);"></div>
<div class="abs" style="left:1034px;top:86px;width:188px;height:1px;background:#b8b8b8;"></div>
<div class="abs" style="left:1039px;top:71px;width:41px;height:16px;background:#ededed;border:1px solid #b0b0b0;border-bottom:none;border-radius:3px 3px 0 0;"></div>
<div class="abs" style="left:1081px;top:72px;width:32px;height:14px;background:linear-gradient(#dadada,#c6c6c6);border:1px solid #aaa;border-bottom:none;border-radius:3px 3px 0 0;"></div>
<div class="abs" style="left:1114px;top:72px;width:32px;height:14px;background:linear-gradient(#dadada,#c6c6c6);border:1px solid #aaa;border-bottom:none;border-radius:3px 3px 0 0;"></div>
<div class="t" style="left:1044px;top:72px;font-size:10px;color:#333;">图层</div><div class="t" style="left:1067px;top:72px;font-size:10px;color:#888;">×</div>
<div class="t" style="left:1086px;top:72px;font-size:10px;color:#222;">通道</div>
<div class="t" style="left:1119px;top:72px;font-size:10px;color:#222;">路径</div>
<div class="abs" style="left:1205px;top:69px;width:6px;height:1px;background:#555;"></div><div class="t" style="left:1214px;top:62px;font-size:10px;color:#666;">×</div>
<div class="abs" style="left:1208px;top:76px;width:14px;height:10px;background:#ededed;border:1px solid #bbb;border-radius:5px 0 0 0;"></div><svg class="abs" style="left:1211px;top:79px" width="11" height="6"><path d="M0 1h4l-2 3z" fill="#333"/><path d="M5 1h6M5 3h6M5 5h6" stroke="#333" stroke-width="1"/></svg>
<div class="abs" style="left:1039px;top:90px;width:81px;height:19px;background:#fff;border:1px solid #e0e0e0;"></div>
<div class="t" style="left:1044px;top:93px;font-size:11px;color:#000;">正常</div>
<svg class="abs" style="left:1108px;top:97px" width="9" height="6"><path d="M0.5 0.5h8l-4 4.5z" fill="#111"/></svg>
<div class="t" style="left:1122px;top:92px;font-size:10.5px;letter-spacing:-1px;color:#000;">不透明度:</div>
<div class="abs" style="left:1172px;top:91px;width:35px;height:16px;background:#fff;border:1px solid #d8d8d8;"></div>
<div class="t" style="left:1175px;top:92px;font-size:10px;color:#222;">100%</div>
<div class="abs" style="left:1208px;top:91px;width:14px;height:16px;background:linear-gradient(#eee,#d4d4d4);border:1px solid #c4c4c4;"></div><svg class="abs" style="left:1213px;top:96px" width="5" height="7"><path d="M0.5 0.5v6l3.5-3z" fill="#555"/></svg>
<div class="abs" style="left:1172px;top:115px;width:35px;height:16px;background:#fff;border:1px solid #d8d8d8;"></div>
<div class="t" style="left:1175px;top:116px;font-size:10px;color:#222;">100%</div>
<div class="abs" style="left:1208px;top:115px;width:14px;height:16px;background:linear-gradient(#eee,#d4d4d4);border:1px solid #c4c4c4;"></div><svg class="abs" style="left:1213px;top:120px" width="5" height="7"><path d="M0.5 0.5v6l3.5-3z" fill="#555"/></svg>
<div class="abs" style="left:1034px;top:111px;width:188px;height:1px;background:#d0d0d0;"></div>
<div class="t" style="left:1040px;top:117px;font-size:10.5px;color:#000;">锁定:</div>
<svg class="abs" style="left:1071px;top:118px" width="11" height="11"><rect x="0.5" y="0.5" width="10" height="10" fill="#f4f4f4" stroke="#888"/><rect x="1" y="1" width="3" height="3" fill="#bbb"/><rect x="7" y="1" width="3" height="3" fill="#bbb"/><rect x="4" y="4" width="3" height="3" fill="#bbb"/><rect x="1" y="7" width="3" height="3" fill="#bbb"/><rect x="7" y="7" width="3" height="3" fill="#bbb"/></svg>
<svg class="abs" style="left:1086px;top:117px" width="13" height="13"><path d="M11.5 1.5L5 8l-1.5 3L1 12" stroke="#555" stroke-width="2" fill="none"/><path d="M12 1L6 7" stroke="#888" stroke-width="1"/></svg>
<svg class="abs" style="left:1101px;top:117px" width="12" height="12"><path d="M6 0.5v11M0.5 6h11" stroke="#333" stroke-width="1.3"/><path d="M6 0l2 2.5H4zM6 12l2-2.5H4zM0 6l2.5-2v4zM12 6l-2.5-2v4z" fill="#333"/></svg>
<svg class="abs" style="left:1116px;top:117px" width="11" height="12"><rect x="1" y="5.5" width="9" height="6" fill="#444"/><path d="M3 6V3.8a2.5 2.5 0 015 0V6" fill="none" stroke="#444" stroke-width="1.4"/></svg>
<div class="t" style="left:1144px;top:117px;font-size:10.5px;color:#000;">填充:</div>
<div class="abs" style="left:1034px;top:134px;width:177px;height:1px;background:#c8c8c8;"></div>
<div class="abs" style="left:1057px;top:135px;width:154px;height:22px;background:#3399ff;"></div>
<div class="abs" style="left:1034px;top:156px;width:177px;height:1px;background:#cfcfcf;"></div>
<div class="abs" style="left:1034px;top:179px;width:177px;height:1px;background:#c4c4c4;"></div>
<div class="abs" style="left:1056px;top:135px;width:1px;height:44px;background:#cfcfcf;"></div>
<div class="abs" style="left:1211px;top:135px;width:11px;height:366px;background:#efefef;border-left:1px solid #dcdcdc;"></div>
<svg class="abs" style="left:1213px;top:139px" width="8" height="6"><path d="M4 1L7.5 5H0.5z" fill="#999"/></svg>
<div class="abs" style="left:1038px;top:137px;width:16px;height:16px;background:#e2e2e2;border:1px solid #d2d2d2;"></div><svg class="abs" style="left:1039px;top:140px" width="14" height="10" viewBox="0 0 14 10"><path d="M1 5.5C3 1.5 11 1.5 13 5.5 11 8.5 3 8.5 1 5.5z" fill="#555"/><circle cx="7" cy="5" r="2.4" fill="#111"/><path d="M1 4.5C3 1 11 1 13 4.5" stroke="#222" stroke-width="1.2" fill="none"/></svg>
<div class="abs" style="left:1038px;top:159px;width:16px;height:16px;background:#e2e2e2;border:1px solid #d2d2d2;"></div><svg class="abs" style="left:1039px;top:162px" width="14" height="10" viewBox="0 0 14 10"><path d="M1 5.5C3 1.5 11 1.5 13 5.5 11 8.5 3 8.5 1 5.5z" fill="#555"/><circle cx="7" cy="5" r="2.4" fill="#111"/><path d="M1 4.5C3 1 11 1 13 4.5" stroke="#222" stroke-width="1.2" fill="none"/></svg>
<svg class="abs" style="left:1058px;top:137px" width="32" height="19" viewBox="0 0 32 19"><rect x="0.5" y="0.5" width="31" height="18" fill="#fff" stroke="#123"/><rect x="2" y="2" width="4" height="4" fill="#d0d0d0"/><rect x="10" y="2" width="4" height="4" fill="#d0d0d0"/><rect x="18" y="2" width="4" height="4" fill="#d0d0d0"/><rect x="26" y="2" width="4" height="4" fill="#d0d0d0"/><rect x="6" y="6" width="4" height="4" fill="#d0d0d0"/><rect x="14" y="6" width="4" height="4" fill="#d0d0d0"/><rect x="22" y="6" width="4" height="4" fill="#d0d0d0"/><rect x="2" y="10" width="4" height="4" fill="#d0d0d0"/><rect x="10" y="10" width="4" height="4" fill="#d0d0d0"/><rect x="18" y="10" width="4" height="4" fill="#d0d0d0"/><rect x="26" y="10" width="4" height="4" fill="#d0d0d0"/><rect x="6" y="14" width="4" height="4" fill="#d0d0d0"/><rect x="14" y="14" width="4" height="4" fill="#d0d0d0"/><rect x="22" y="14" width="4" height="4" fill="#d0d0d0"/><path d="M2 17V13l2-2 1 2 2-3 1 3 2-2 2 2 1-3 2 3 2-2 2 2 2-3 1 3 2-2 2 1 2-3 1 3v4z" fill="#6bab2a"/><rect x="12" y="12" width="3" height="5" fill="#e8ee50"/><rect x="1.5" y="1.5" width="29" height="16" fill="none" stroke="#222" stroke-width="1"/></svg>
<div class="abs" style="left:1059px;top:160px;width:30px;height:15px;background:#fff;border:1px solid #222;"></div>
<div class="t" style="left:1095px;top:139px;font-size:10.5px;color:#e8f3ff;">图层 3 副本 5</div>
<div class="t" style="left:1097px;top:161px;font-size:10px;font-style:italic;color:#111;">背景</div>
<svg class="abs" style="left:1188px;top:162px" width="10" height="11"><rect x="1" y="5" width="8" height="5.5" fill="#eee" stroke="#666" stroke-width="1"/><path d="M3 5V3.5a2 2 0 014 0V5" fill="none" stroke="#666" stroke-width="1.2"/></svg>
<div class="abs" style="left:5px;top:69px;width:51px;height:360px;background:#ececec;border-radius:2px;"></div>
<div class="abs" style="left:6px;top:78px;width:49px;height:21px;background:linear-gradient(#2c68c0,#163d8a);"></div>
<div class="abs" style="left:5px;top:69px;width:51px;height:8px;background:linear-gradient(#e8e8e8,#d6d6d6);border-radius:2px 2px 0 0;"></div>
<svg class="abs" style="left:8px;top:71px" width="6" height="4"><path d="M2.5 0v4L0 2zM5.5 0v4L3 2z" fill="#666"/></svg>
<div class="t" style="left:11px;top:80px;font-size:15px;line-height:16px;color:#cfe2ff;">Ps</div>
<div class="abs" style="left:7px;top:162px;width:47px;height:1px;background:#cfcfcf;"></div>
<div class="abs" style="left:7px;top:245px;width:47px;height:1px;background:#cfcfcf;"></div>
<div class="abs" style="left:7px;top:288px;width:47px;height:1px;background:#cfcfcf;"></div>
<div class="abs" style="left:8px;top:122px;width:22px;height:17px;background:#d2d2d2;border:1px solid #555;border-radius:4px;"></div>
<svg class="abs" style="left:9.0px;top:101.0px" width="18" height="18" viewBox="0 0 18 18"><rect x="2.5" y="3.5" width="12" height="11" fill="none" stroke="#333" stroke-width="1.2" stroke-dasharray="3 1.5"/><path d="M18 15V18H15z" fill="#222"/></svg>
<svg class="abs" style="left:31.0px;top:101.0px" width="18" height="18" viewBox="0 0 18 18"><path d="M3 2l8 5.5-4 .8L5 12z" fill="#222"/><path d="M13 8v8M9 12h8" stroke="#222" stroke-width="1.2"/><path d="M13 7l1.6 2h-3.2zM13 17l1.6-2h-3.2zM8 12l2-1.6v3.2zM18 12l-2-1.6v3.2z" fill="#222"/></svg>
<svg class="abs" style="left:9.0px;top:122.0px" width="18" height="18" viewBox="0 0 18 18"><ellipse cx="10" cy="7.5" rx="6.5" ry="4" transform="rotate(-12 10 7.5)" fill="none" stroke="#444" stroke-width="1.3"/><path d="M4.5 10c-2 1.5-1 3 0.3 3.3s1 2-0.5 3" fill="none" stroke="#444" stroke-width="1.1"/><path d="M18 15V18H15z" fill="#222"/></svg>
<svg class="abs" style="left:31.0px;top:122.0px" width="18" height="18" viewBox="0 0 18 18"><path d="M3 3l3 3M7 2v3M2 7h3" stroke="#666" stroke-width="1" stroke-dasharray="1.5 1"/><path d="M6 5.5L15.5 15" stroke="#333" stroke-width="2.4"/><path d="M6.5 6L15 14.5" stroke="#bbb" stroke-width="0.8"/><path d="M18 15V18H15z" fill="#222"/></svg>
<svg class="abs" style="left:9.0px;top:141.0px" width="18" height="18" viewBox="0 0 18 18"><path d="M4.5 1v12.5H17M1 4.5h12.5V17" fill="none" stroke="#333" stroke-width="1.6"/><path d="M3 15L15 3" stroke="#333" stroke-width="1"/></svg>
<svg class="abs" style="left:31.0px;top:141.0px" width="18" height="18" viewBox="0 0 18 18"><path d="M14 1L5 10l-1.5 5L9 12.5 15.5 3z" fill="#666" stroke="#222" stroke-width="0.8"/><path d="M3 15l3-2" stroke="#222" stroke-width="1.5"/><path d="M18 15V18H15z" fill="#222"/></svg>
<svg class="abs" style="left:9.0px;top:165.0px" width="18" height="18" viewBox="0 0 18 18"><rect x="1" y="6" width="16" height="7" rx="3.5" transform="rotate(-38 9 9.5)" fill="#ddd" stroke="#444" stroke-width="1.1"/><rect x="6.5" y="6.5" width="5" height="6" transform="rotate(-38 9 9.5)" fill="#999"/><path d="M2 10a6 6 0 002 6" stroke="#555" stroke-width="1" stroke-dasharray="1.5 1" fill="none"/><path d="M18 15V18H15z" fill="#222"/></svg>
<svg class="abs" style="left:31.0px;top:165.0px" width="18" height="18" viewBox="0 0 18 18"><path d="M15.5 2L8 9.5" stroke="#333" stroke-width="2.2"/><path d="M8 9L4 12.5c-1 1.5-1 3-2.5 3.5 2.5.5 5-.5 6-2.5l2.5-3z" fill="#444"/><path d="M18 15V18H15z" fill="#222"/></svg>
<svg class="abs" style="left:9.0px;top:185.0px" width="18" height="18" viewBox="0 0 18 18"><path d="M7 2h4v3.5l1.5 3.5h-7L7 5.500z" fill="#444"/><rect x="2.5" y="10" width="13" height="3.5" fill="#555"/><rect x="2" y="14.5" width="14" height="1.8" fill="#222"/><path d="M18 15V18H15z" fill="#222"/></svg>
<svg class="abs" style="left:31.0px;top:185.0px" width="18" height="18" viewBox="0 0 18 18"><path d="M15 2L8 9" stroke="#333" stroke-width="2"/><path d="M8 9l-4 3.500c-1 1.500-.5 2.500-2 3 2.500.5 4.500 0 5.500-2l2.500-3z" fill="#444"/><path d="M3 6a6 6 0 019-2M15 8a6 6 0 01-4 7" stroke="#444" stroke-width="1" fill="none" stroke-dasharray="2 1"/><path d="M18 15V18H15z" fill="#222"/></svg>
<svg class="abs" style="left:9.0px;top:204.0px" width="18" height="18" viewBox="0 0 18 18"><path d="M2 12L9 4h7L9 12z" fill="#f0f0f0" stroke="#333" stroke-width="1.1"/><path d="M2 12v2.500h7L16 6.500V4" fill="#bbb" stroke="#333" stroke-width="1"/><path d="M18 15V18H15z" fill="#222"/></svg>
<svg class="abs" style="left:31px;top:205px" width="19" height="17" viewBox="0 0 19 17"><defs><linearGradient id="gg"><stop offset="0" stop-color="#fff"/><stop offset="1" stop-color="#111"/></linearGradient></defs><rect x="1.5" y="2.500" width="14" height="11" fill="url(#gg)" stroke="#444" stroke-width="1"/><path d="M19 14v3h-3z" fill="#222"/></svg>
<svg class="abs" style="left:9.0px;top:224.0px" width="18" height="18" viewBox="0 0 18 18"><path d="M9 1.500c3 4 5 7 5 10a5 5 0 01-10 0c0-3 2-6 5-10z" fill="#bdbdbd" stroke="#555" stroke-width="1"/><path d="M5 3l3 5-2 1 4 6" stroke="#fff" stroke-width="1.500" fill="none"/><path d="M18 15V18H15z" fill="#222"/></svg>
<svg class="abs" style="left:31.0px;top:224.0px" width="18" height="18" viewBox="0 0 18 18"><circle cx="7" cy="7" r="4.500" fill="#222"/><circle cx="5.500" cy="5.500" r="1.300" fill="#888"/><path d="M10 10l6 6" stroke="#333" stroke-width="1.800"/><path d="M18 15V18H15z" fill="#222"/></svg>
<svg class="abs" style="left:9.0px;top:247.0px" width="18" height="18" viewBox="0 0 18 18"><path d="M9 1l3.500 7-1.500 5h-4L5.500 8z" fill="#eee" stroke="#222" stroke-width="1.200"/><path d="M9 3v6" stroke="#222" stroke-width="1"/><rect x="6.500" y="14" width="5" height="2.500" fill="#222"/><path d="M18 15V18H15z" fill="#222"/></svg>
<div class="t" style="left:33px;top:245px;font-size:20px;line-height:22px;font-family:'Liberation Serif',serif;color:#222;">T</div><svg class="abs" style="left:46px;top:262px" width="3" height="3"><path d="M3 0v3H0z" fill="#222"/></svg>
<svg class="abs" style="left:9.0px;top:267.0px" width="18" height="18" viewBox="0 0 18 18"><path d="M5 2l8 8-4 .300 2.500 5-2 1L7 11.500 4 14z" fill="#111"/><path d="M18 15V18H15z" fill="#222"/></svg>
<svg class="abs" style="left:31.0px;top:267.0px" width="18" height="18" viewBox="0 0 18 18"><defs><linearGradient id="gs" x2="0" y2="1"><stop offset="0" stop-color="#f2f2f2"/><stop offset="1" stop-color="#a8a8a8"/></linearGradient></defs><rect x="2" y="4" width="14" height="10" rx="2.500" fill="url(#gs)" stroke="#666" stroke-width="1"/><path d="M18 15V18H15z" fill="#222"/></svg>
<svg class="abs" style="left:9.0px;top:291.0px" width="18" height="18" viewBox="0 0 18 18"><path d="M2.500 2.500h12v9l-4 4h-8z" fill="#eee" stroke="#444" stroke-width="1.100"/><path d="M14.500 11.500h-4v4" fill="#bbb" stroke="#444" stroke-width="1"/><path d="M5 6h7M5 8.500h7" stroke="#888" stroke-width="1"/><path d="M18 15V18H15z" fill="#222"/></svg>
<svg class="abs" style="left:31.0px;top:291.0px" width="18" height="18" viewBox="0 0 18 18"><path d="M15 1.500c1.500 1 1.500 2.500.5 3.500L13 7.500 10.500 5 13 2.500c.7-.800 1.300-1.200 2-1z" fill="#222"/><path d="M11 6.500L4 13.500l-1.500 3 3-1.500 7-7" fill="#ccc" stroke="#333" stroke-width="1"/><path d="M18 15V18H15z" fill="#222"/></svg>
<svg class="abs" style="left:9.0px;top:311.0px" width="18" height="18" viewBox="0 0 18 18"><path d="M4 9V5.500a1 1 0 012 0V3.500a1 1 0 012 0V3a1 1 0 012 0v1a1 1 0 012 0v5.500c1-1.500 2.500-1.500 2.500-.500L13 14c-1 2-2 2.500-4 2.500S5 15.500 4.500 13z" fill="#f4f4f4" stroke="#333" stroke-width="1"/><path d="M6 5v4M8 3.500V9M10 4v5" stroke="#333" stroke-width="0.800"/></svg>
<svg class="abs" style="left:31.0px;top:311.0px" width="18" height="18" viewBox="0 0 18 18"><circle cx="7.500" cy="7" r="4.800" fill="#e8e8e8" stroke="#333" stroke-width="1.400"/><path d="M11 10.500l5 5" stroke="#333" stroke-width="2.200"/></svg>
<div class="abs" style="left:23px;top:348px;width:24px;height:24px;background:#fff;border:1px solid #d8d8d8;"></div>
<div class="abs" style="left:12px;top:337px;width:23px;height:23px;background:#000;border:1px solid #ddd;"></div>
<svg class="abs" style="left:38px;top:336px" width="10" height="10" viewBox="0 0 10 10"><path d="M2 3c3-2 6 0 5.500 4" fill="none" stroke="#333" stroke-width="1.300"/><path d="M0 3.500l3-3 .5 4zM7.500 9.500l-2.500-3h4.500z" fill="#333"/></svg>
<div class="abs" style="left:14px;top:368px;width:6px;height:6px;background:#fff;border:1px solid #555;"></div><div class="abs" style="left:11px;top:365px;width:6px;height:6px;background:#000;"></div>
<div class="abs" style="left:21px;top:383px;width:20px;height:14px;background:#f2f2f2;border:1px solid #444;"></div><div class="abs" style="left:26px;top:385px;width:10px;height:10px;border:1px solid #333;border-radius:50%;background:#fff;"></div>
<div class="abs" style="left:14px;top:404px;width:34px;height:18px;background:linear-gradient(#f8f8f8,#dcdcdc);border:1px solid #aaa;border-radius:4px;"></div>
<div class="abs" style="left:20px;top:406px;width:21px;height:14px;background:linear-gradient(#c4dcf8,#8fb8ea);border:2px solid #3c5f98;border-radius:1px;"></div>
<svg class="abs" style="left:44px;top:418px" width="3" height="3"><path d="M3 0v3H0z" fill="#222"/></svg>
</div></body></html>
